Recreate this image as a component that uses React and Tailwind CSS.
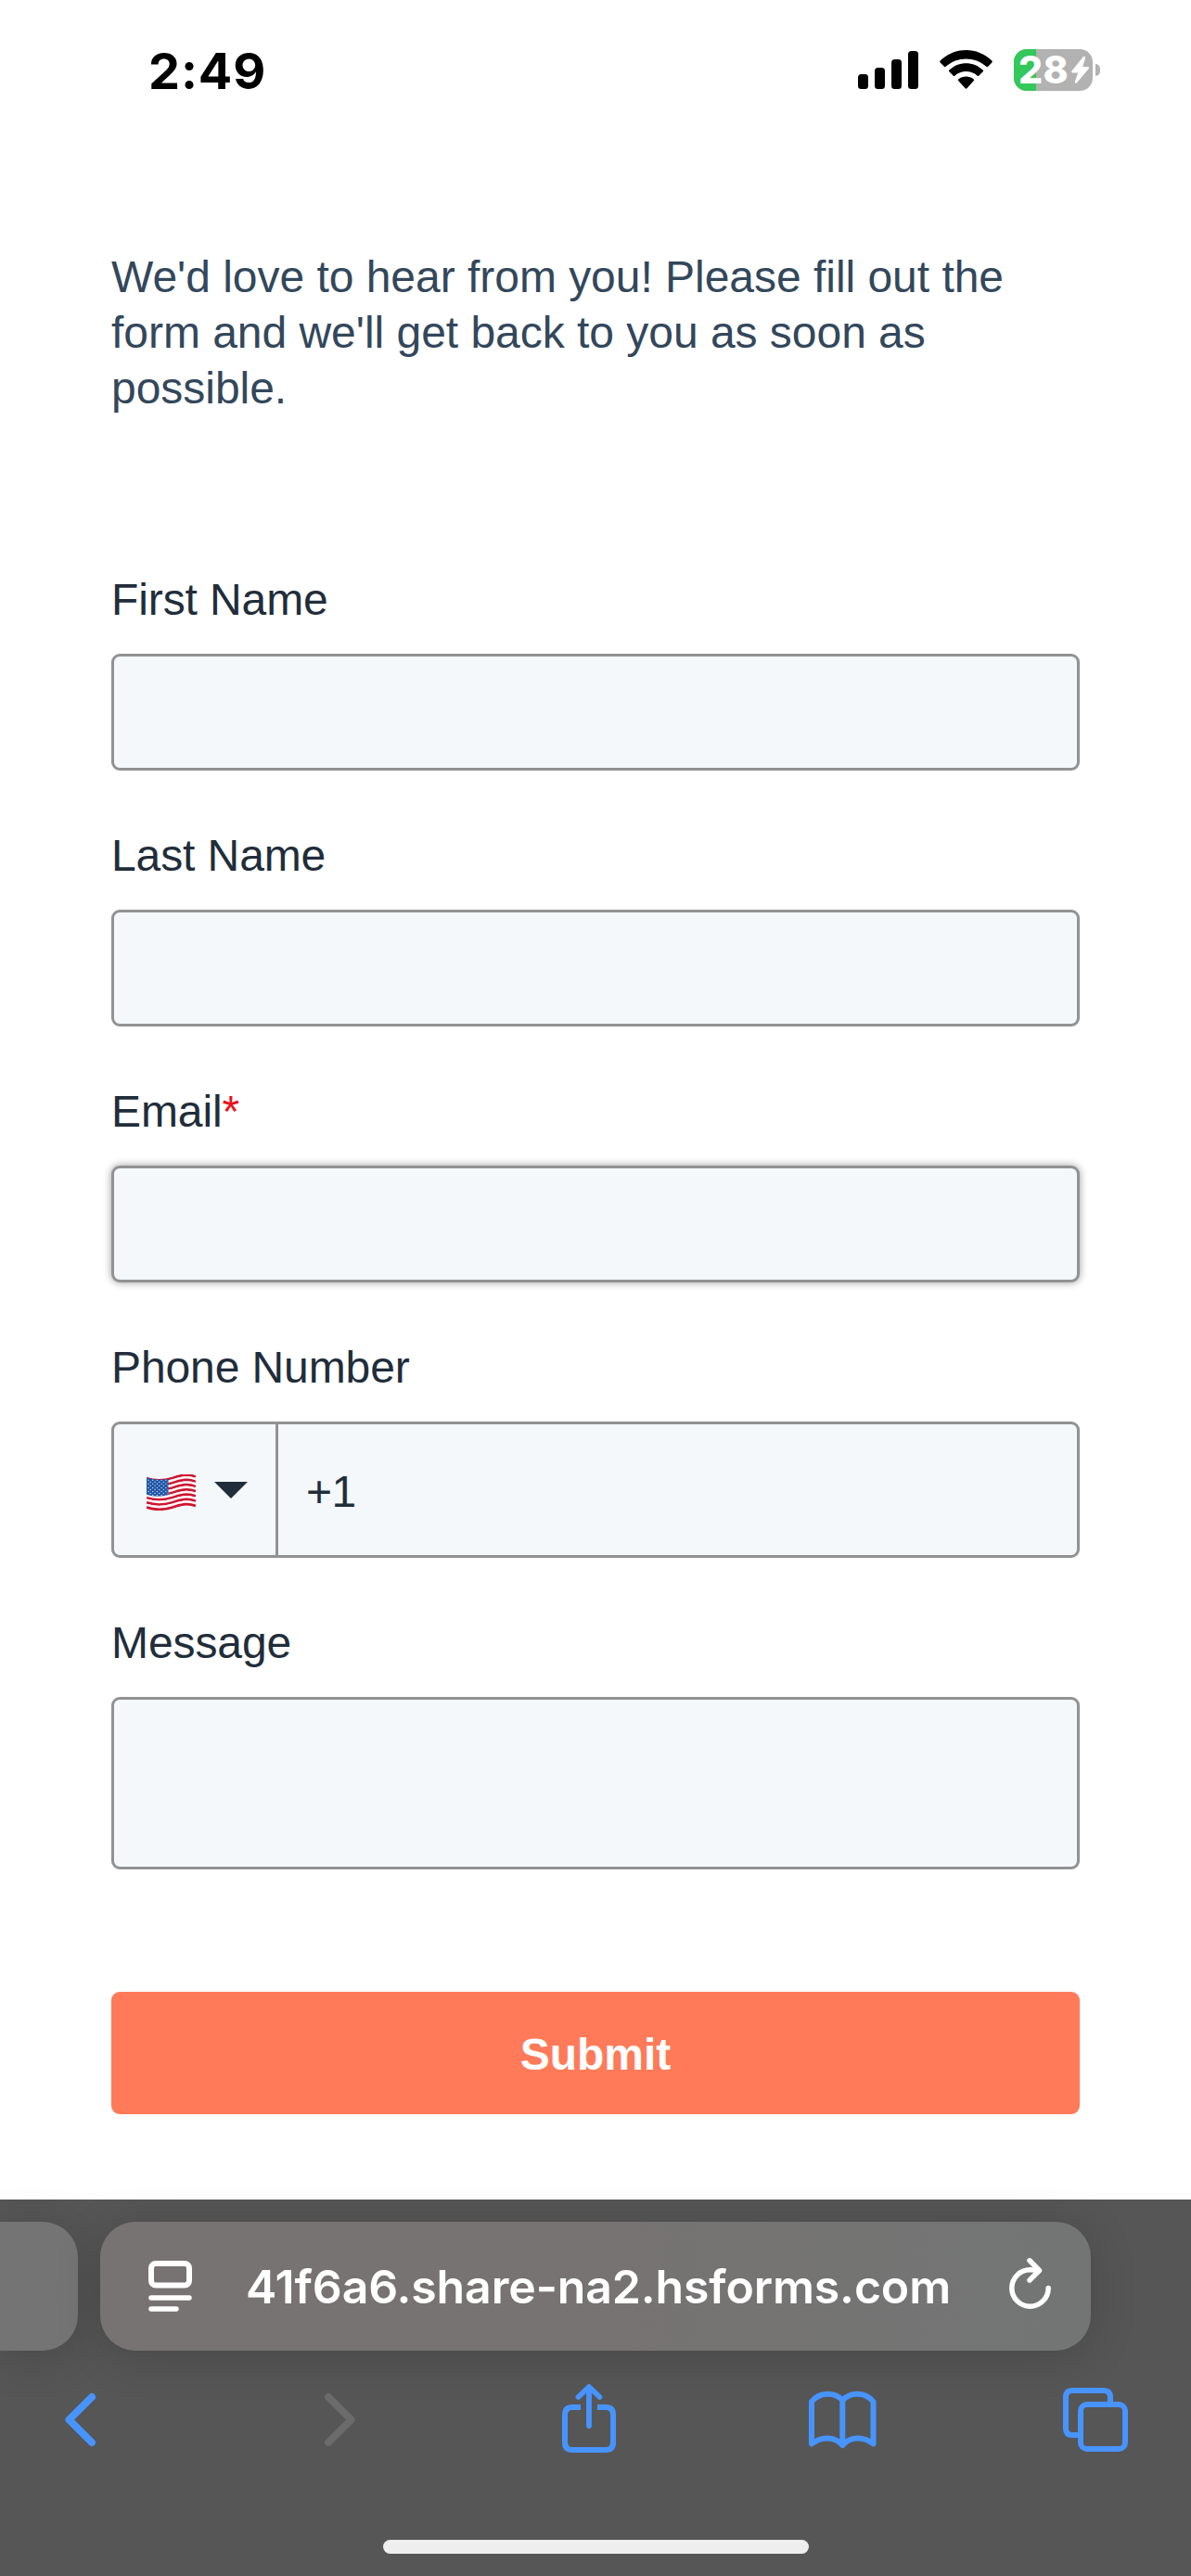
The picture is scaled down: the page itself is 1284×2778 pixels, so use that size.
const STRIPES = Array.from({ length: 13 }, (_, i) => i);
const STARS = Array.from({ length: 45 }, (_, i) => ({ row: Math.floor(i / 5), col: i % 5 }));

function StatusBar() {
  return (
    <header className="flex h-[150px] items-start">
      <div className="ml-[160px] mt-[44px] w-[140px] font-['Inter'] text-[54px] font-bold leading-[65px] tracking-[0.9px] text-black">
        2:49
      </div>
      <svg className="ml-[625px] mt-[55px]" width="65" height="41" viewBox="0 0 65 41">
        <rect x="0" y="25" width="11" height="16" rx="3.5" />
        <rect x="18" y="18" width="11" height="23" rx="3.5" />
        <rect x="36" y="9" width="11" height="32" rx="3.5" />
        <rect x="54" y="0" width="11" height="41" rx="3.5" />
      </svg>
      <svg className="ml-[23px] mt-[54px]" width="57" height="42" viewBox="0 0 57 42">
        <path d="M0.6 11.6 C16.5 -3.8 40.500 -3.8 56.400 11.600 Q57.200 12.500 56.400 13.400 L51.900 17.900 Q51.200 18.500 50.400 17.800 C38 6.600 19 6.600 6.600 17.800 Q5.800 18.500 5.100 17.900 L0.600 13.400 Q-0.200 12.500 0.600 11.600 Z" />
        <path d="M10.300 21.500 C20.500 11.700 36.500 11.700 46.700 21.500 Q47.500 22.400 46.700 23.300 L42.200 27.800 Q41.500 28.400 40.700 27.700 C33.800 21.500 23.200 21.500 16.300 27.700 Q15.500 28.400 14.800 27.800 L10.300 23.300 Q9.500 22.400 10.300 21.500 Z" />
        <path d="M20.300 31.400 C25 27.600 32 27.600 36.700 31.400 Q37.600 32.300 36.800 33.100 L29.400 41.300 Q28.500 42.200 27.600 41.300 L20.200 33.100 Q19.400 32.300 20.300 31.400 Z" />
      </svg>
      <div className="relative ml-[23px] mt-[53px] flex h-[45px] w-[85px] items-center rounded-[14px] bg-[#b2b2b2]">
        <div className="h-full w-[24px] rounded-l-[14px] bg-[#34c759]" />
        <div className="absolute left-[5px] top-0 font-['Inter'] text-[41px] font-extrabold leading-[45px] tracking-[0.4px] text-white">
          28
        </div>
        <svg className="absolute left-[61px] top-[7px]" width="21" height="31" viewBox="0 0 21 31">
          <path
            d="M13.800 1.300 L1.500 16.600 Q0.500 18.300 2.300 18.400 L8.200 18.500 L5 27.800 Q4.600 30.600 6.900 29.300 L19.800 14 Q20.800 12.300 19 12.200 L13.200 12 L16 3 Q16.300 -0.200 13.800 1.300 Z"
            fill="#fff"
          />
        </svg>
      </div>
      <div className="ml-[3px] mt-[69px] h-[13px] w-[5px] rounded-r-full bg-[#b2b2b2]" />
    </header>
  );
}

function Label({ children, required }) {
  return (
    <label className="block h-[88px] whitespace-nowrap text-[48px] leading-[60px] tracking-[-0.1px] text-[#212d3a]">
      {children}
      {required && <span className="text-[#e51520]">*</span>}
    </label>
  );
}

function Flag() {
  const wave = "C10 7.500 20 6.500 28 4 C36 1.200 44 -1 53 2.600";
  return (
    <svg className="mt-[6px]" width="53" height="39" viewBox="0 0 53 39">
      <defs>
        <clipPath id="canton">
          <path d="M0 3.500 C8 6 16 6.300 23.500 5 L23.500 22 C16 24 8 24.300 0 21.700 Z" />
        </clipPath>
      </defs>
      {STRIPES.map((i) => (
        <g key={i} transform={`translate(0 ${i * 2.62})`}>
          <path
            d={`M0 4.200 ${wave}`}
            fill="none"
            stroke={i % 2 === 0 ? "#cf1430" : "#fbf3f4"}
            strokeWidth="2.700"
          />
        </g>
      ))}
      <g clipPath="url(#canton)">
        <rect width="24" height="25" fill="#1d55a5" />
        {STARS.map(({ row, col }) => (
          <circle
            key={`${row}-${col}`}
            cx={2 + col * 4.7 + (row % 2) * 2.3}
            cy={6.2 + row * 2.05}
            r="0.750"
            fill="#c5d6ee"
          />
        ))}
      </g>
    </svg>
  );
}

const FIELD = "block w-full rounded-[9px] border-[3px] border-[#929292] bg-[#f4f8fb] outline-none";

function ContactForm() {
  return (
    <form className="mx-[120px] font-['Liberation_Sans',Arial,sans-serif]">
      <p className="mt-[119px] whitespace-nowrap text-[48px] leading-[60px] tracking-[-0.03px] text-[#33475b]">
        We'd love to hear from you! Please fill out the
        <br />
        form and we'll get back to you as soon as
        <br />
        possible.
      </p>
      <div className="mt-[168px]">
        <Label>First Name</Label>
        <input className={`${FIELD} h-[126px]`} />
      </div>
      <div className="mt-[62px]">
        <Label>Last Name</Label>
        <input className={`${FIELD} h-[126px]`} />
      </div>
      <div className="mt-[62px]">
        <Label required>Email</Label>
        <input className={`${FIELD} h-[126px] shadow-[0_0_9px_rgba(0,0,0,0.4)]`} />
      </div>
      <div className="mt-[62px]">
        <Label>Phone Number</Label>
        <div className={`${FIELD} h-[147px]`}>
          <div className="flex h-full">
            <div className="flex w-[177px] items-center border-r-[3px] border-[#929292] pl-[35px]">
              <Flag />
              <svg className="ml-[20px]" width="36" height="18" viewBox="0 0 36 18">
                <path d="M0 0 H36 L18 18 Z" fill="#212d3a" />
              </svg>
            </div>
            <div className="flex items-center pl-[30px] pt-[5px] text-[48px] tracking-[-0.5px] text-[#212d3a]">+1</div>
          </div>
        </div>
      </div>
      <div className="mt-[62px]">
        <Label>Message</Label>
        <textarea className={`${FIELD} h-[186px] resize-none`} />
      </div>
      <button
        type="button"
        className="mt-[132px] block h-[132px] w-full rounded-[9px] bg-[#ff7a59] pt-[3px] text-[48px] font-bold text-white"
      >
        Submit
      </button>
    </form>
  );
}

function AddressRow() {
  return (
    <div className="flex h-[139px] gap-6">
      <div className="w-[84px] rounded-r-[38px] bg-[#747474] shadow-[0_6px_50px_rgba(0,0,0,0.16)]" />
      <div className="flex w-[1068px] items-center rounded-[38px] bg-linear-to-r from-[#777372] via-[#767372] to-[#737575] shadow-[0_6px_50px_rgba(0,0,0,0.16)]">
        <svg className="ml-[52px]" width="47" height="55" viewBox="0 0 47 55" fill="none" stroke="#fff" strokeWidth="6">
          <rect x="3" y="3" width="41" height="23.500" rx="5" />
          <path d="M3 40 H44 M3 52 H30" strokeWidth="5.500" strokeLinecap="round" />
        </svg>
        <div className="ml-[58px] w-[770px] whitespace-nowrap pt-[1px] font-['Inter'] text-[50px] font-semibold tracking-[-0.15px] text-white">
          41f6a6.share-na2.hsforms.com
        </div>
        <svg
          className="mb-[5px] ml-[51px]"
          width="48"
          height="58"
          viewBox="0 0 48 58"
          fill="none"
          stroke="#fff"
          strokeWidth="5.500"
          strokeLinecap="round"
          strokeLinejoin="round"
        >
          <path d="M44.200 33.500 A19.700 19.700 0 1 1 24.500 13.800 Q29 13.800 34 14.800" />
          <path d="M24 3.800 L34.500 14.500 L24 25" />
        </svg>
      </div>
    </div>
  );
}

function Toolbar() {
  return (
    <nav className="mt-[33px] flex h-[80px] text-[#4794ff]">
      <svg className="ml-[69px]" width="35" height="80" viewBox="0 0 35 80" fill="none" stroke="currentColor" strokeWidth="8" strokeLinecap="round" strokeLinejoin="round">
        <path d="M30 17 L5.500 41.500 L30 66" />
      </svg>
      <svg className="ml-[245px]" width="35" height="80" viewBox="0 0 35 80" fill="none" stroke="#6b6b6b" strokeWidth="8" strokeLinecap="round" strokeLinejoin="round">
        <path d="M5 17 L29.500 41.500 L5 66" />
      </svg>
      <svg className="ml-[221px]" width="60" height="80" viewBox="0 0 60 80" fill="none" stroke="currentColor" strokeWidth="6">
        <path d="M21 28 H12 Q4 28 4 36 V66 Q4 74 12 74 H48 Q56 74 56 66 V36 Q56 28 48 28 H39" />
        <path d="M30 7 V48 M18.500 17 L30 6 L41.500 17" strokeWidth="5.800" strokeLinecap="round" strokeLinejoin="round" />
      </svg>
      <svg className="ml-[206px]" width="75" height="80" viewBox="0 0 75 80" fill="none" stroke="currentColor" strokeWidth="6" strokeLinecap="round" strokeLinejoin="round">
        <path d="M37.300 20.500 V69 C29.500 59.500 15 59 4 67.500 V22 C12.500 11.200 29 11.200 37.300 20.500 C45.600 11.200 62 11.200 70.500 22 V67.500 C59.500 59 45 59.500 37.300 69" />
      </svg>
      <svg className="ml-[200px]" width="70" height="80" viewBox="0 0 70 80" fill="none" stroke="currentColor" strokeWidth="6">
        <path d="M51 22 V17 Q51 10 44 10 H10 Q3 10 3 17 V51 Q3 58 10 58 H16" />
        <rect x="19" y="25" width="48" height="48" rx="7" />
      </svg>
    </nav>
  );
}

export default function App() {
  return (
    <div className="flex h-[2778px] w-[1284px] flex-col overflow-hidden bg-white">
      <StatusBar />
      <main className="h-[2222px] shrink-0">
        <ContactForm />
      </main>
      <footer className="flex h-[406px] shrink-0 flex-col bg-[#565656] pt-[24px]">
        <AddressRow />
        <Toolbar />
        <div className="mx-auto mt-[91px] h-[15px] w-[459px] rounded-full bg-[#eeeeee]" />
      </footer>
    </div>
  );
}
